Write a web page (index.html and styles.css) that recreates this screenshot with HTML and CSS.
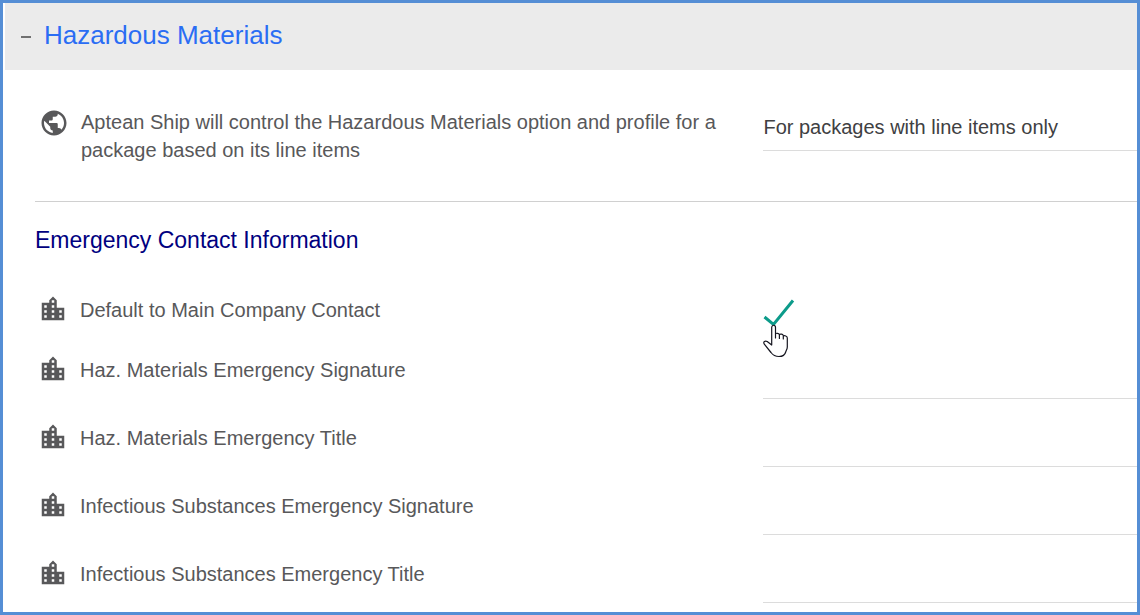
FILE: index.html
```html
<!DOCTYPE html>
<html lang="en">
<head>
<meta charset="utf-8">
<meta name="viewport" content="width=device-width, initial-scale=1">
<title>Hazardous Materials</title>
<link rel="stylesheet" href="styles.css">
</head>
<body>
<svg class="sprite" aria-hidden="true">
  <symbol id="globe" viewBox="0 0 24 24"><path d="M12 2C6.480 2 2 6.480 2 12s4.480 10 10 10 10-4.480 10-10S17.520 2 12 2zm-1 17.930c-3.950-.49-7-3.850-7-7.930 0-.62.080-1.210.210-1.790L9 15v1c0 1.100.9 2 2 2v1.930zm6.900-2.540c-.26-.81-1-1.390-1.900-1.390h-1v-3c0-.55-.45-1-1-1H8v-2h2c.55 0 1-.45 1-1V7h2c1.100 0 2-.9 2-2v-.41c2.930 1.190 5 4.060 5 7.410 0 2.080-.8 3.970-2.100 5.390z"/></symbol>
  <symbol id="city" viewBox="0 0.800 24 24"><path d="M15 11V5l-3-3-3 3v2H3v14h18V11h-6zm-8 8H5v-2h2v2zm0-4H5v-2h2v2zm0-4H5V9h2v2zm6 8h-2v-2h2v2zm0-4h-2v-2h2v2zm0-4h-2V9h2v2zm0-4h-2V5h2v2zm6 12h-2v-2h2v2zm0-4h-2v-2h2v2z"/></symbol>
</svg>
<main class="panel">
  <h1 class="panel-title">
    <button class="panel-toggle" type="button" aria-expanded="true"><span class="minus"></span>Hazardous Materials</button>
  </h1>
  <form class="content">
    <div class="row row-option">
      <label class="row-label" for="control"><svg class="icon"><use href="#globe"/></svg><span>Aptean Ship will control the Hazardous Materials option and profile for a package based on its line items</span></label>
      <select class="field" id="control"><option>For packages with line items only</option></select>
    </div>
    <h2 class="section-title">Emergency Contact Information</h2>
    <div class="row">
      <label class="row-label" for="main-contact"><svg class="icon"><use href="#city"/></svg><span>Default to Main Company Contact</span></label>
      <div class="check">
        <input class="check-input" type="checkbox" id="main-contact" checked>
        <svg class="check-mark" viewBox="0 0 32 28" aria-hidden="true"><path d="M1.500 18L10.500 25.500 30 1.500"/></svg>
        <svg class="pointer" viewBox="0 0 28 34" aria-hidden="true"><path d="M8.700 21V3.500c0-3 3.800-3 3.800 0V14V9.800c.8-1 3.200-.6 3.900.8V14.500V10.600c.9-1 3.300-.5 3.900.8V15v-3c1.200-.8 4 0 4 2v9c0 2-1 3.200-1.600 5-.8 3-3.200 4.500-6.700 4.500-3.500 0-6-1.200-8-4L1.300 20.200c-1.500-2.400.8-3.700 2.900-2.700z"/></svg>
      </div>
    </div>
    <div class="row">
      <label class="row-label" for="haz-signature"><svg class="icon"><use href="#city"/></svg><span>Haz. Materials Emergency Signature</span></label>
      <input class="field" type="text" id="haz-signature">
    </div>
    <div class="row">
      <label class="row-label" for="haz-title"><svg class="icon"><use href="#city"/></svg><span>Haz. Materials Emergency Title</span></label>
      <input class="field" type="text" id="haz-title">
    </div>
    <div class="row">
      <label class="row-label" for="inf-signature"><svg class="icon"><use href="#city"/></svg><span>Infectious Substances Emergency Signature</span></label>
      <input class="field" type="text" id="inf-signature">
    </div>
    <div class="row">
      <label class="row-label" for="inf-title"><svg class="icon"><use href="#city"/></svg><span>Infectious Substances Emergency Title</span></label>
      <input class="field" type="text" id="inf-title">
    </div>
  </form>
</main>
</body>
</html>
```
FILE: styles.css
```css
* {
  box-sizing: border-box;
}

body {
  margin: 0;
  background: #fff;
  color: #58585a;
  font: 20px/30px "Liberation Sans", Arial, sans-serif;
}

.sprite {
  display: none;
}

.panel {
  min-height: 100vh;
  border: 3px solid #558ed5;
}

.panel-title {
  margin: 0 0 0 2px;
  background: #ebebeb;
}

.panel-toggle {
  display: flex;
  align-items: center;
  gap: 13px;
  width: 100%;
  padding: 16px 16px 19px;
  border: 0;
  background: none;
  color: #2a6df4;
  font: 26px/32px "Liberation Sans", Arial, sans-serif;
  text-align: left;
}

.minus {
  width: 10px;
  height: 2px;
  margin-top: 4px;
  background: #707070;
}

.content {
  padding-left: 32px;
}

.row {
  display: grid;
  grid-template-columns: 661fr 339fr;
  align-items: start;
  padding-top: 24px;
}

.row-option {
  padding: 38px 0 37px;
  border-bottom: 1px solid #d0d0d0;
  line-height: 28px;
}

.row-label {
  display: flex;
  align-items: flex-start;
  gap: 12px;
  padding: 0 40px 0 3px;
}

.row-option .row-label {
  padding-left: 4px;
}

.icon {
  flex: none;
  width: 30px;
  height: 30px;
  fill: #58585a;
}

.field {
  width: 100%;
  height: 44px;
  padding: 0;
  border: 0;
  border-bottom: 1px solid #dcdcdc;
  border-radius: 0;
  outline: 0;
  background: none;
  color: #404042;
  font: inherit;
  appearance: none;
}

.row-option .field {
  height: 43px;
  padding-bottom: 4px;
}

.section-title {
  margin: 0;
  padding: 22px 0 15px;
  color: #000080;
  font-size: 23px;
  font-weight: 400;
  line-height: 32px;
}

.check {
  position: relative;
  width: 32px;
  height: 36px;
  padding-top: 4px;
}

.check-input {
  position: absolute;
  inset: 0;
  width: 100%;
  height: 100%;
  margin: 0;
  opacity: 0;
}

.check-mark {
  display: block;
  width: 32px;
  height: 28px;
  fill: none;
  stroke: #0c9b8a;
  stroke-width: 3;
}

.pointer {
  position: absolute;
  top: 29px;
  left: 0;
  width: 28px;
  height: 34px;
  fill: #fff;
  stroke: #15151f;
  stroke-width: 1.2;
  stroke-linejoin: round;
  pointer-events: none;
}
```
